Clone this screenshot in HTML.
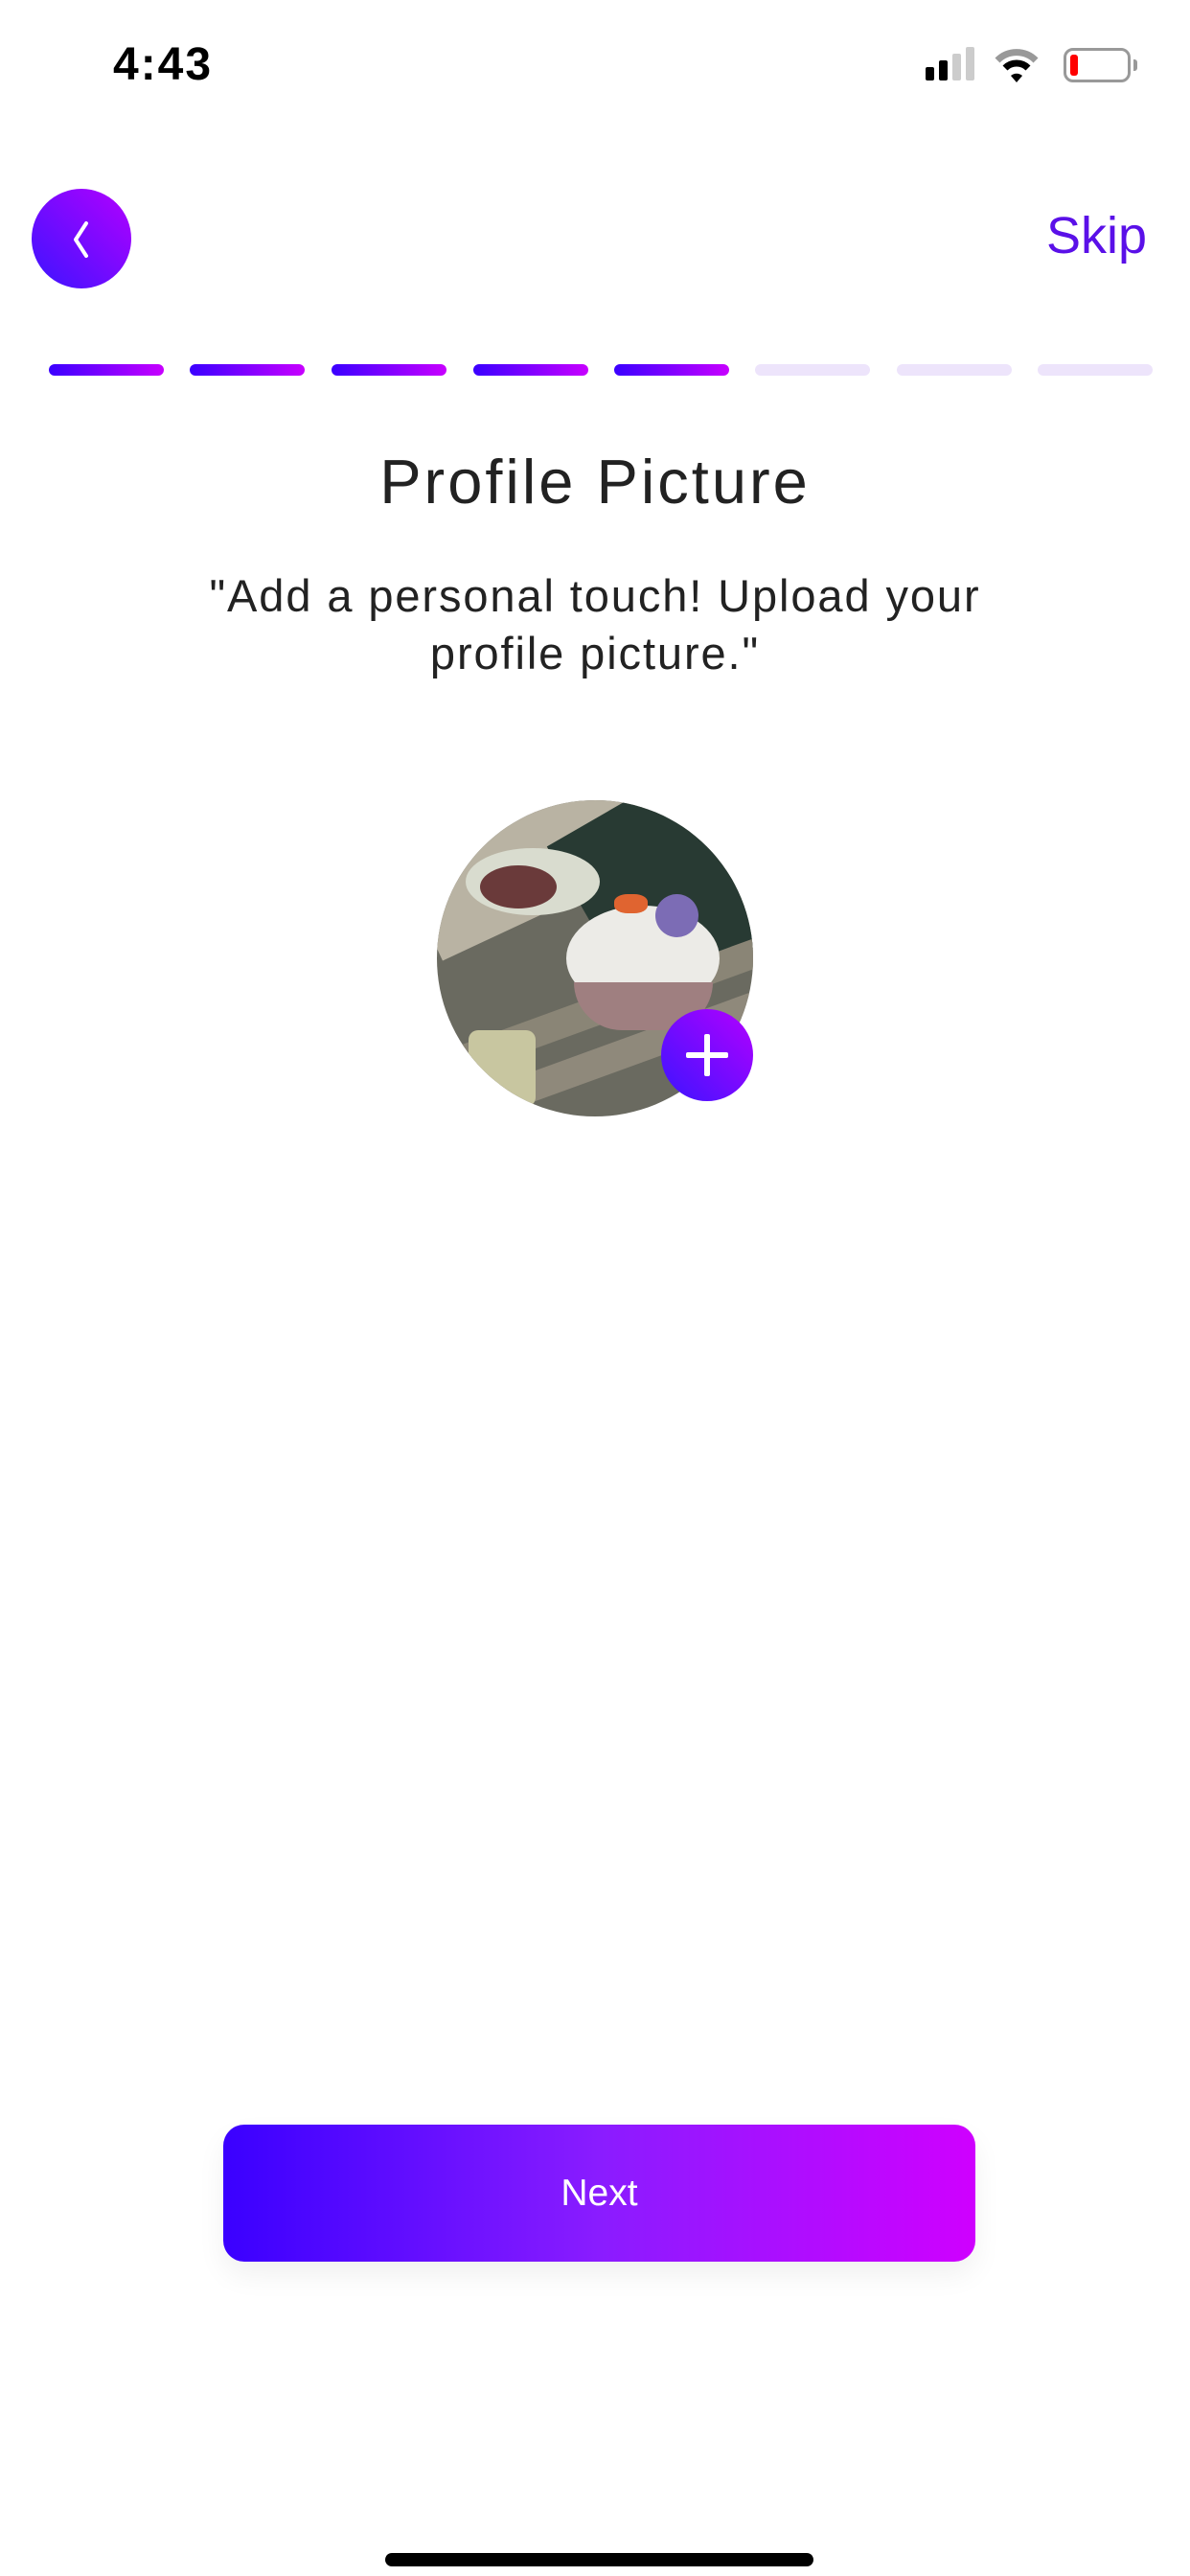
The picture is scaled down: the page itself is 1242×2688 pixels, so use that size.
<!DOCTYPE html>
<html><head><meta charset="utf-8">
<style>
*{margin:0;padding:0;box-sizing:border-box}
html,body{width:1242px;height:2688px;background:#fff;overflow:hidden;font-family:"Liberation Sans",sans-serif;position:relative}
.abs{position:absolute}
.bar{position:absolute;top:380px;width:120px;height:12px;border-radius:6px}
.on{background:linear-gradient(90deg,#3a00ff,#c800ff)}
.off{background:#ede4fb}
</style></head><body>
<div class="abs" style="left:118px;top:40px;font-size:48px;font-weight:bold;color:#000;letter-spacing:2px">4:43</div>
<div class="abs" style="left:966px;top:70px;width:9px;height:14px;background:#000;border-radius:2px"></div>
<div class="abs" style="left:980px;top:63px;width:9px;height:21px;background:#000;border-radius:2px"></div>
<div class="abs" style="left:994px;top:56px;width:9px;height:28px;background:#ccc;border-radius:2px"></div>
<div class="abs" style="left:1008px;top:49px;width:9px;height:35px;background:#ccc;border-radius:2px"></div>
<svg class="abs" style="left:1038px;top:48px" width="46" height="40" viewBox="0 0 46 40">
<path d="M3 15 A28 28 0 0 1 43 15" stroke="#999" stroke-width="7" fill="none"/>
<path d="M11 23 A17 17 0 0 1 35 23" stroke="#000" stroke-width="7" fill="none"/>
<path d="M17 31 L23 38 L29 31 A9 9 0 0 0 17 31Z" fill="#000"/>
</svg>
<div class="abs" style="left:1110px;top:50px;width:70px;height:36px;border:3px solid #999;border-radius:10px"></div>
<div class="abs" style="left:1117px;top:57px;width:8px;height:22px;background:#f00;border-radius:3px"></div>
<div class="abs" style="left:1183px;top:62px;width:4px;height:12px;background:#999;border-radius:0 3px 3px 0"></div>

<div class="abs" style="left:33px;top:197px;width:104px;height:104px;border-radius:50%;background:linear-gradient(225deg,#b300ff,#3c14ff)"></div>
<svg class="abs" style="left:70px;top:230px" width="30" height="40" viewBox="0 0 30 40"><path d="M20 3 L9 20 L20 37" stroke="#fff" stroke-width="4" fill="none" stroke-linecap="round" stroke-linejoin="round"/></svg>
<div class="abs" style="left:1092px;top:215px;font-size:54px;color:#5a10e8">Skip</div>

<div class="bar on" style="left:51px"></div>
<div class="bar on" style="left:198px"></div>
<div class="bar on" style="left:346px"></div>
<div class="bar on" style="left:494px"></div>
<div class="bar on" style="left:641px"></div>
<div class="bar off" style="left:788px"></div>
<div class="bar off" style="left:936px"></div>
<div class="bar off" style="left:1083px"></div>

<div class="abs" style="left:0;width:1242px;top:465px;text-align:center;font-size:65px;color:#222;letter-spacing:3px">Profile Picture</div>
<div class="abs" style="left:0;width:1242px;top:592px;text-align:center;font-size:47px;line-height:60px;color:#222;letter-spacing:1.9px">"Add a personal touch! Upload your<br>profile picture."</div>

<div class="abs" style="left:456px;top:835px;width:330px;height:330px;border-radius:50%;overflow:hidden;background:#6a6a60">
 <div class="abs" style="left:-40px;top:-40px;width:260px;height:160px;background:#b9b3a3;transform:rotate(-25deg)"></div>
 <div class="abs" style="left:150px;top:-20px;width:220px;height:200px;background:#283a33;transform:rotate(-30deg)"></div>
 <div class="abs" style="left:-20px;top:200px;width:400px;height:30px;background:#8a8576;transform:rotate(-20deg)"></div>
 <div class="abs" style="left:-20px;top:255px;width:400px;height:30px;background:#8f897b;transform:rotate(-20deg)"></div>
 <div class="abs" style="left:30px;top:50px;width:140px;height:70px;border-radius:50%;background:#d9dccf"></div>
 <div class="abs" style="left:45px;top:68px;width:80px;height:45px;border-radius:50%;background:#6a3a3a"></div>
 <div class="abs" style="left:135px;top:110px;width:160px;height:110px;border-radius:50%;background:#ecebe7"></div>
 <div class="abs" style="left:143px;top:190px;width:145px;height:50px;border-radius:0 0 70px 70px;background:#9f7f80"></div>
 <div class="abs" style="left:228px;top:98px;width:45px;height:45px;border-radius:50%;background:#7c6cb5"></div>
 <div class="abs" style="left:185px;top:98px;width:35px;height:20px;border-radius:40%;background:#e06430"></div>
 <div class="abs" style="left:33px;top:240px;width:70px;height:80px;border-radius:10px;background:#c8c6a0"></div>
</div>
<div class="abs" style="left:690px;top:1053px;width:96px;height:96px;border-radius:50%;background:linear-gradient(225deg,#b300ff,#3c14ff)"></div>
<div class="abs" style="left:716px;top:1098px;width:44px;height:6px;background:#fff;border-radius:2px"></div>
<div class="abs" style="left:735px;top:1079px;width:6px;height:44px;background:#fff;border-radius:2px"></div>

<div class="abs" style="left:233px;top:2217px;width:785px;height:143px;border-radius:22px;background:linear-gradient(90deg,#3a00ff,#8a1cff 50%,#cf00ff);box-shadow:0 14px 30px rgba(0,0,0,0.06);color:#fff;font-size:39px;text-align:center;line-height:143px">Next</div>
<div class="abs" style="left:402px;top:2664px;width:447px;height:14px;border-radius:7px;background:#000"></div>
</body></html>
